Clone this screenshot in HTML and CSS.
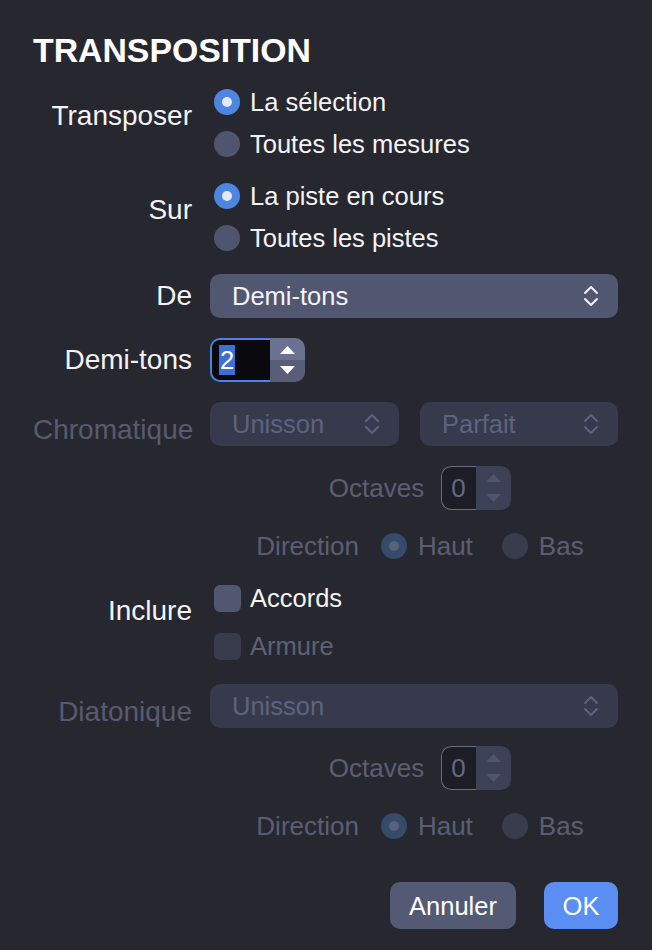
FILE: index.html
```html
<!DOCTYPE html>
<html lang="fr">
<head>
<meta charset="utf-8">
<title>Transposition</title>
<link rel="stylesheet" href="styles.css">
</head>
<body>
<div class="dialog">
  <h1 class="title">TRANSPOSITION</h1>

  <div class="row r-transposer">
    <div class="label lift">Transposer</div>
    <div class="options">
      <div class="opt"><span class="radio on"></span><span>La sélection</span></div>
      <div class="opt"><span class="radio"></span><span>Toutes les mesures</span></div>
    </div>
  </div>

  <div class="row r-sur">
    <div class="label lift">Sur</div>
    <div class="options">
      <div class="opt"><span class="radio on"></span><span>La piste en cours</span></div>
      <div class="opt"><span class="radio"></span><span>Toutes les pistes</span></div>
    </div>
  </div>

  <div class="row r-de">
    <div class="label">De</div>
    <div class="select">
      <span>Demi-tons</span>
      <svg class="chev" viewBox="0 0 16 22"><path d="M2 8 L8 2 L14 8 M2 14 L8 20 L14 14"/></svg>
    </div>
  </div>

  <div class="row r-gap20">
    <div class="label">Demi-tons</div>
    <div class="stepper">
      <div class="field focus"><span class="sel">2</span></div>
      <div class="arrows">
        <div class="up"><svg class="tri" viewBox="0 0 15 8"><polygon points="0,8 7.5,0 15,8"/></svg></div>
        <div class="down"><svg class="tri" viewBox="0 0 15 8"><polygon points="0,0 7.5,8 15,0"/></svg></div>
      </div>
    </div>
  </div>

  <div class="row r-gap20">
    <div class="label dim drop">Chromatique</div>
    <div class="pair">
      <div class="select disabled">
        <span>Unisson</span>
        <svg class="chev" viewBox="0 0 16 22"><path d="M2 8 L8 2 L14 8 M2 14 L8 20 L14 14"/></svg>
      </div>
      <div class="select disabled">
        <span>Parfait</span>
        <svg class="chev" viewBox="0 0 16 22"><path d="M2 8 L8 2 L14 8 M2 14 L8 20 L14 14"/></svg>
      </div>
    </div>
  </div>

  <div class="row sub r-gap20">
    <div class="group">
      <span class="sublabel">Octaves</span>
      <div class="stepper small disabled">
        <div class="field"><span>0</span></div>
        <div class="arrows">
          <div class="up"><svg class="tri" viewBox="0 0 15 8"><polygon points="0,8 7.5,0 15,8"/></svg></div>
          <div class="down"><svg class="tri" viewBox="0 0 15 8"><polygon points="0,0 7.5,8 15,0"/></svg></div>
        </div>
      </div>
    </div>
  </div>

  <div class="row sub r-gap14">
    <div class="group dir">
      <span class="sublabel">Direction</span>
      <span class="radio dimon"></span><span class="txt">Haut</span>
      <span class="radio dimoff"></span><span class="txt">Bas</span>
    </div>
  </div>

  <div class="row r-inclure">
    <div class="label lift2">Inclure</div>
    <div class="options">
      <div class="copt"><span class="check"></span><span>Accords</span></div>
      <div class="copt dimtext"><span class="check dim"></span><span>Armure</span></div>
    </div>
  </div>

  <div class="row r-gap14">
    <div class="label dim drop">Diatonique</div>
    <div class="select disabled">
      <span>Unisson</span>
      <svg class="chev" viewBox="0 0 16 22"><path d="M2 8 L8 2 L14 8 M2 14 L8 20 L14 14"/></svg>
    </div>
  </div>

  <div class="row sub r-gap18">
    <div class="group">
      <span class="sublabel">Octaves</span>
      <div class="stepper small disabled">
        <div class="field"><span>0</span></div>
        <div class="arrows">
          <div class="up"><svg class="tri" viewBox="0 0 15 8"><polygon points="0,8 7.5,0 15,8"/></svg></div>
          <div class="down"><svg class="tri" viewBox="0 0 15 8"><polygon points="0,0 7.5,8 15,0"/></svg></div>
        </div>
      </div>
    </div>
  </div>

  <div class="row sub r-gap14">
    <div class="group dir">
      <span class="sublabel">Direction</span>
      <span class="radio dimon"></span><span class="txt">Haut</span>
      <span class="radio dimoff"></span><span class="txt">Bas</span>
    </div>
  </div>

  <div class="actions">
    <div class="btn cancel">Annuler</div>
    <div class="btn ok">OK</div>
  </div>
</div>
</body>
</html>
```

FILE: styles.css
```css
* { box-sizing: border-box; }

body {
  margin: 0;
  background: #27282f;
  color: #f3f3f6;
  font-family: "Liberation Sans", Arial, sans-serif;
  font-size: 25.5px;
  line-height: 30px;
}

.dialog {
  padding: 30px 34px 0 33px;
}

.title {
  margin: 0;
  font-size: 33.8px;
  line-height: 40px;
  font-weight: 700;
  color: #ffffff;
}

.row {
  display: grid;
  grid-template-columns: 159px 408px;
  column-gap: 18px;
  align-items: center;
}

.r-transposer { margin-top: 11px; }
.r-sur { margin-top: 10px; }
.r-de { margin-top: 15px; }
.r-gap20 { margin-top: 20px; }
.r-gap18 { margin-top: 18px; }
.r-gap14 { margin-top: 14px; }
.r-inclure { margin-top: 6px; }

.label {
  text-align: right;
  white-space: nowrap;
  font-size: 28px;
  line-height: 32px;
}
.label.lift { padding-bottom: 14px; }
.label.lift2 { padding-bottom: 22px; }
.label.drop { padding-top: 12px; }
.label.dim { color: #585b6f; }

/* radios */
.opt {
  display: flex;
  align-items: center;
  height: 42px;
  gap: 10px;
  padding-left: 4px;
}

.radio {
  flex: none;
  width: 26px;
  height: 26px;
  border-radius: 50%;
  background: #50556f;
  display: flex;
  align-items: center;
  justify-content: center;
}
.radio.on { background: #4c86e0; }
.radio.on::after {
  content: "";
  width: 10px;
  height: 10px;
  border-radius: 50%;
  background: #e4eaf3;
}
.radio.dimon { background: #364a6a; }
.radio.dimon::after {
  content: "";
  width: 10px;
  height: 10px;
  border-radius: 50%;
  background: #55627c;
}
.radio.dimoff { background: #393c4c; }

/* selects */
.select {
  height: 44px;
  border-radius: 10px;
  background: #515770;
  display: flex;
  align-items: center;
  justify-content: space-between;
  padding: 0 19px 0 22px;
  color: #f3f3f6;
}
.chev {
  width: 16px;
  height: 22px;
  fill: none;
  stroke: #f3f3f6;
  stroke-width: 2;
  stroke-linecap: round;
  stroke-linejoin: round;
}
.select.disabled {
  background: #373a4d;
  color: #5e637d;
}
.select.disabled .chev { stroke: #5e637d; }

.pair {
  display: grid;
  grid-template-columns: 189px 1fr;
  column-gap: 21px;
}

/* steppers */
.stepper {
  display: flex;
  width: 95px;
  height: 44px;
}
.field {
  width: 60px;
  height: 44px;
  background: #0a0a0e;
  border-radius: 10px 0 0 10px;
  display: flex;
  align-items: center;
  padding-left: 9px;
}
.field.focus {
  border: 2px solid #4a82e6;
  border-right: none;
  padding-left: 7px;
}
.sel {
  background: #3b6fd6;
  color: #ffffff;
  padding: 0 1px;
  line-height: 30px;
}
.arrows {
  width: 35px;
  display: flex;
  flex-direction: column;
  border-radius: 0 10px 10px 0;
  overflow: hidden;
}
.arrows .up,
.arrows .down {
  flex: 1;
  display: flex;
  align-items: center;
  justify-content: center;
}
.arrows .up { background: #6b7190; padding-top: 2px; }
.arrows .down { background: #595e78; padding-bottom: 2px; }
.tri {
  width: 15px;
  height: 8px;
  fill: #ffffff;
}

.stepper.small { width: 70px; }
.stepper.small .field {
  width: 35px;
  background: #1c1d25;
  border: 1.5px solid #6a6d82;
  border-right: none;
  padding-left: 9px;
  color: #65697f;
}
.stepper.small .arrows .up,
.stepper.small .arrows .down { background: #3d4157; }
.stepper.small .tri { fill: #50556d; }

/* sub rows */
.sub .group {
  grid-column: 2;
  height: 44px;
  display: flex;
  align-items: center;
  justify-content: center;
  padding-left: 12px;
  color: #5b5e73;
  font-size: 26px;
}
.sublabel { margin-right: 17px; }
.dir .sublabel { margin-right: 22px; }
.dir .radio { margin-right: 11px; }
.dir .txt + .radio { margin-left: 29px; }

/* checkboxes */
.copt {
  display: flex;
  align-items: center;
  height: 48px;
  gap: 9px;
  padding-left: 4px;
}
.check {
  flex: none;
  width: 27px;
  height: 27px;
  border-radius: 6px;
  background: #515771;
}
.check.dim { background: #383b4b; }
.dimtext { color: #5d6176; }

/* buttons */
.actions {
  display: flex;
  justify-content: flex-end;
  gap: 28px;
  margin-top: 34px;
}
.btn {
  height: 47px;
  border-radius: 10px;
  display: flex;
  align-items: center;
  justify-content: center;
  color: #ffffff;
}
.btn.cancel { width: 126px; background: #545a73; }
.btn.ok { width: 74px; background: #5b8ef2; }
```
